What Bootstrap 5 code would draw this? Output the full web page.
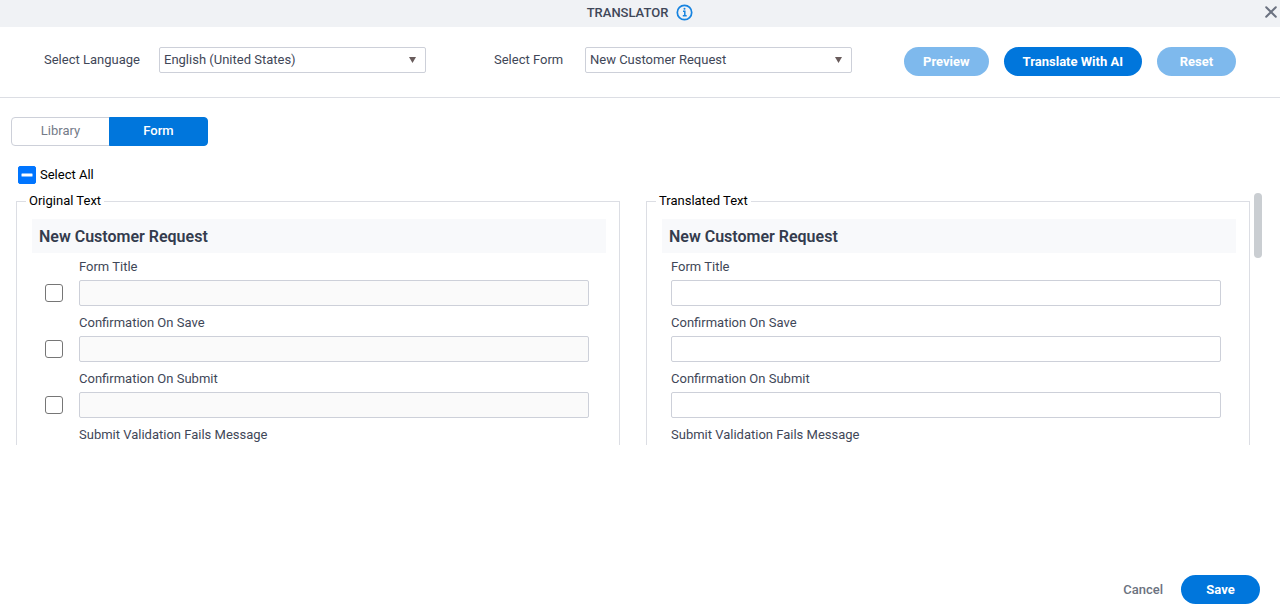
<!DOCTYPE html>
<html lang="en">
<head>
<meta charset="utf-8">
<meta name="viewport" content="width=device-width, initial-scale=1">
<title>Translator</title>
<link href="https://cdn.jsdelivr.net/npm/bootstrap@5.3.0/dist/css/bootstrap.min.css" rel="stylesheet">
<style>
  :root { --brand: #0076dc; --ink: #3f4758; --line: #dcdee4; --field: #cdd0d9; }
  body { font-family: Roboto, sans-serif; font-size: 13px; line-height: 20px; color: var(--ink); background: #fff; }
  .titlebar { height: 27px; padding-bottom: 2px; background: #f0f2f5; }
  .titlebar h1 { font-size: 13px; line-height: 20px; font-weight: 500; }
  .titlebar .close-btn { right: 0; top: 2px; width: 18px; height: 20px; }
  .toolbar { padding: 20px 44px 21px; border-bottom: 1px solid var(--line); }
  .pickers { gap: 68px; }
  .pickers label { min-width: 91px; }
  .pickers label.wide { min-width: 115px; }
  .pick { height: 26px; width: 267px; padding: 0 24px 0 4px; font-size: 13px; line-height: 20px; color: var(--ink);
    border: 1px solid var(--field); border-radius: 2px;
    background: #fff url("data:image/svg+xml,%3Csvg xmlns='http://www.w3.org/2000/svg' viewBox='0 0 7 6'%3E%3Cpath d='M0 0h7L3.500 6z' fill='%23695c5c'/%3E%3C/svg%3E") no-repeat right 9px center / 7px 6px; }
  .pill { height: 29px; min-width: 79px; padding: 0 19px; border: 0; border-radius: 15px; font-size: 13px; line-height: 20px; font-weight: 700; background: var(--brand); color: #fff; }
  .pill:hover { background: #0068c4; color: #fff; }
  .pill:disabled { background: var(--brand); color: #fff; opacity: .5; }
  .plain { font-weight: 500; font-size: 13px; line-height: 20px; color: #6b7280; padding: 0; border: 0; }
  .tabs-row { margin: 19px 11px 0; }
  .tab-btn { width: 99px; height: 29px; padding: 0 0 2px; font-size: 13px; line-height: 20px; color: #747b88; border: 1px solid var(--field); border-radius: 4px; background: #fff; }
  .tab-btn.active { background: var(--brand) !important; border-color: var(--brand) !important; color: #fff; font-weight: 500; }
  .tick.form-check-input { width: 18px; height: 18px; margin: 0; flex: none; border: 1px solid #767676; border-radius: 3px; }
  .tick.form-check-input:indeterminate { background-color: #0075ff; border-color: #0075ff; border-radius: 2px;
    background-image: url("data:image/svg+xml,%3Csvg xmlns='http://www.w3.org/2000/svg' viewBox='0 0 16 16'%3E%3Crect x='2.500' y='6.500' width='11' height='3' rx='.5' fill='%23fff'/%3E%3C/svg%3E"); }
  .select-all { padding: 19px 18px 0; color: #000; }
  .pane-wrap { margin-top: 8px; }
  .pane-scroll { height: 252px; overflow-y: auto; scrollbar-width: none; padding: 0 30px 0 16px; }
  .pane-scroll::-webkit-scrollbar { display: none; }
  .thumb { top: 0; right: 18px; width: 8px; height: 65px; border-radius: 4px; background: #caced2; }
  .panes { gap: 26px; }
  .pane { flex: 1 1 0; border: 1px solid var(--line); padding: 10px 13px 12px 15px; }
  .pane legend { float: none; width: auto; margin: 0 0 0 -6px; padding: 0 3px; font-size: 13px; line-height: 16px; color: #000; }
  .pane-title { height: 34px; line-height: 36px; margin: 0; padding-left: 7px; font-size: 16px; font-weight: 600; color: #343c4e; background: #f8f9fb; }
  .entry { padding: 4px 0 3px; }
  .entry label { display: block; margin-bottom: 3px; }
  .original .entry { display: grid; grid-template-columns: 34px 1fr; margin: 0 17px 0 13px; }
  .original .entry label { grid-column: 2; }
  .original .tick { align-self: center; }
  .translated .entry { margin: 0 15px 0 9px; }
  .text-line.form-control { height: 26px; padding: 0 4px; font-size: 13px; border: 1px solid var(--field); border-radius: 2px; }
  .text-line.form-control:disabled { background: #fafafa; }
  footer { padding: 20px 20px 9px; gap: 18px; }
</style>
</head>
<body>
<div class="d-flex flex-column min-vh-100">
  <header class="titlebar position-relative d-flex justify-content-center align-items-center gap-2">
    <h1 class="m-0">TRANSLATOR</h1>
    <button type="button" class="btn p-0 border-0 d-flex" aria-label="Information">
      <svg width="17" height="17" viewBox="0 0 17 17" fill="none" stroke="#1683e0"><circle cx="8.500" cy="8.500" r="7.200" stroke-width="1.700"/><path d="M7 7.300h1.800v4M6.800 11.800h3.900" stroke-width="1.500"/><circle cx="8.500" cy="4.700" r="1" fill="#1683e0" stroke="none"/></svg>
    </button>
    <button type="button" class="btn close-btn p-0 border-0 position-absolute d-flex align-items-center justify-content-center" aria-label="Close">
      <svg width="12" height="12" viewBox="0 0 12 12" stroke="#6b7280" stroke-width="2" stroke-linecap="round"><path d="M1.200 1.200l9.600 9.600M10.800 1.200l-9.600 9.600"/></svg>
    </button>
  </header>

  <div class="toolbar d-flex align-items-start">
    <div class="pickers d-flex">
      <div class="d-flex align-items-center">
        <label for="lang" class="wide">Select Language</label>
        <select id="lang" class="form-select pick"><option>English (United States)</option></select>
      </div>
      <div class="d-flex align-items-center">
        <label for="form">Select Form</label>
        <select id="form" class="form-select pick"><option>New Customer Request</option></select>
      </div>
    </div>
    <div class="d-flex ms-auto" style="gap:15px">
      <button type="button" class="btn pill" disabled>Preview</button>
      <button type="button" class="btn pill">Translate With AI</button>
      <button type="button" class="btn pill" disabled>Reset</button>
    </div>
  </div>

  <main>
    <div class="btn-group tabs-row" role="group" aria-label="Section">
      <button type="button" class="btn tab-btn">Library</button>
      <button type="button" class="btn tab-btn active">Form</button>
    </div>
    <div class="select-all d-flex align-items-center">
      <input class="form-check-input tick" type="checkbox" id="all">
      <label for="all" class="ps-1">Select All</label>
    </div>
    <div class="pane-wrap position-relative">
      <div class="pane-scroll">
        <div class="panes d-flex">
          <fieldset class="pane original">
            <legend>Original Text</legend>
            <h2 class="pane-title">New Customer Request</h2>
            <div class="entry"><label for="o1">Form Title</label><input type="checkbox" class="form-check-input tick" aria-label="Select Form Title"><input id="o1" type="text" class="form-control text-line" disabled></div>
            <div class="entry"><label for="o2">Confirmation On Save</label><input type="checkbox" class="form-check-input tick" aria-label="Select Confirmation On Save"><input id="o2" type="text" class="form-control text-line" disabled></div>
            <div class="entry"><label for="o3">Confirmation On Submit</label><input type="checkbox" class="form-check-input tick" aria-label="Select Confirmation On Submit"><input id="o3" type="text" class="form-control text-line" disabled></div>
            <div class="entry"><label for="o4">Submit Validation Fails Message</label><input type="checkbox" class="form-check-input tick" aria-label="Select Submit Validation Fails Message"><input id="o4" type="text" class="form-control text-line" disabled></div>
          </fieldset>
          <fieldset class="pane translated">
            <legend>Translated Text</legend>
            <h2 class="pane-title">New Customer Request</h2>
            <div class="entry"><label for="t1">Form Title</label><input id="t1" type="text" class="form-control text-line"></div>
            <div class="entry"><label for="t2">Confirmation On Save</label><input id="t2" type="text" class="form-control text-line"></div>
            <div class="entry"><label for="t3">Confirmation On Submit</label><input id="t3" type="text" class="form-control text-line"></div>
            <div class="entry"><label for="t4">Submit Validation Fails Message</label><input id="t4" type="text" class="form-control text-line"></div>
          </fieldset>
        </div>
      </div>
      <div class="thumb position-absolute"></div>
    </div>
  </main>

  <footer class="d-flex justify-content-end align-items-center mt-auto">
    <button type="button" class="btn plain">Cancel</button>
    <button type="button" class="btn pill">Save</button>
  </footer>
</div>
<script src="https://cdn.jsdelivr.net/npm/bootstrap@5.3.0/dist/js/bootstrap.bundle.min.js"></script>
<script>document.getElementById('all').indeterminate = true;</script>
</body>
</html>
